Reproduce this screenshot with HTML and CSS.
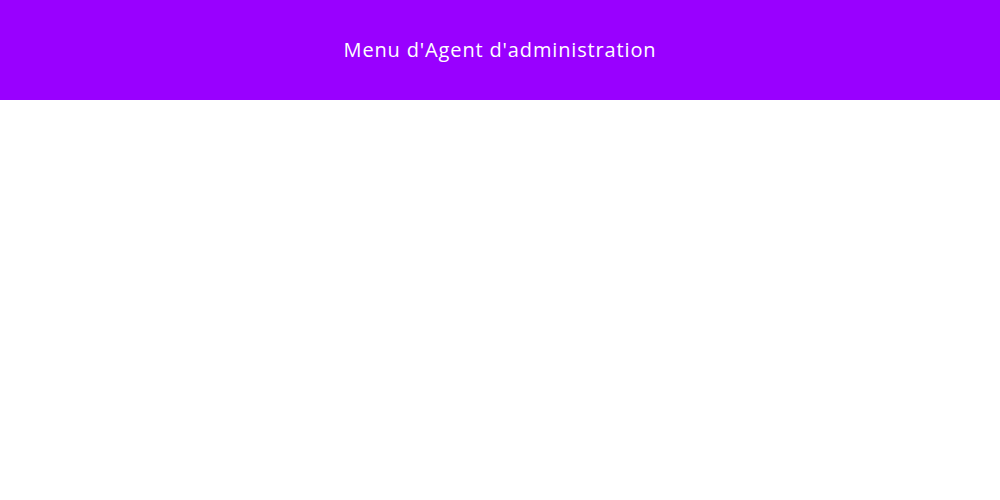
FILE: index.html
```html
<!DOCTYPE html>
<html lang="fr">
<head>
<meta charset="utf-8">
<title>Menu d'Agent d'administration</title>
<link rel="stylesheet" href="styles.css">
</head>
<body>
<header class="topbar">
  <h1 class="topbar-title">Menu d'Agent d'administration</h1>
</header>
</body>
</html>
```
FILE: styles.css
```css
html, body {
  margin: 0;
  padding: 0;
  background: #ffffff;
}
body {
  font-family: "Open Sans", "DejaVu Sans", sans-serif;
}
.topbar {
  height: 100px;
  background: #9900ff;
  display: flex;
  align-items: center;
  justify-content: center;
  box-shadow: 0 3px 10px rgba(0, 0, 0, 0.3);
}
.topbar-title {
  margin: 0 0 2px;
  color: #ffffff;
  font-size: 20px;
  font-weight: 400;
  letter-spacing: 0.85px;
}
```
